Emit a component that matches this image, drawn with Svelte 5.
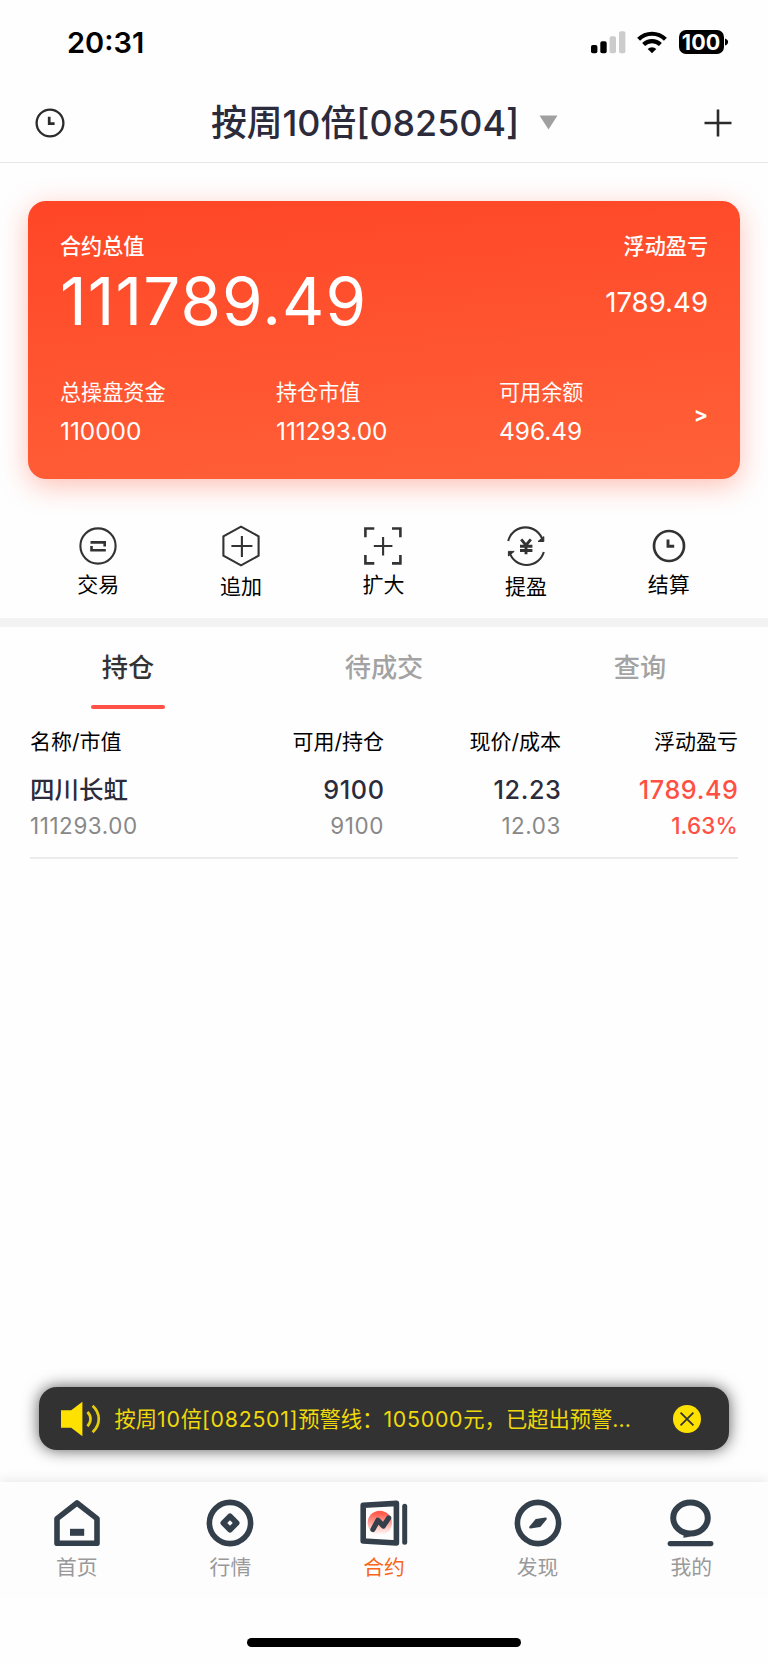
<script lang="ts">
	type Action = { id: string; label: string; tall?: boolean };

	let activeTab = $state(0);
	let activeNav = $state('contract');
	let noticeVisible = $state(true);

	const summary = [
		{ label: '总操盘资金', value: '110000' },
		{ label: '持仓市值', value: '111293.00' },
		{ label: '可用余额', value: '496.49' }
	];

	const actions: Action[] = [
		{ id: 'trade', label: '交易' },
		{ id: 'append', label: '追加', tall: true },
		{ id: 'expand', label: '扩大' },
		{ id: 'withdraw', label: '提盈', tall: true },
		{ id: 'settle', label: '结算' }
	];

	const tabs = ['持仓', '待成交', '查询'];
	const columns = ['名称/市值', '可用/持仓', '现价/成本', '浮动盈亏'];

	const positions = [
		{
			name: '四川长虹',
			marketValue: '111293.00',
			available: '9100',
			held: '9100',
			price: '12.23',
			cost: '12.03',
			profit: '1789.49',
			rate: '1.63%'
		}
	];

	const navItems = [
		{ id: 'home', label: '首页' },
		{ id: 'market', label: '行情' },
		{ id: 'contract', label: '合约' },
		{ id: 'discover', label: '发现' },
		{ id: 'mine', label: '我的' }
	];
</script>

<div class="page">
	<div class="status-bar">
		<span class="time">20:31</span>
		<div class="status-icons">
			<svg class="signal" width="35" height="23" viewBox="0 0 35 23">
				<rect x="0" y="14" width="6.4" height="8.3" rx="1.8" />
				<rect x="9.3" y="10.3" width="6.4" height="12" rx="1.8" />
				<rect x="18.6" y="5.3" width="6.4" height="17" rx="1.8" fill="#ccc" />
				<rect x="28" y="0.3" width="6.4" height="22" rx="1.8" fill="#ccc" />
			</svg>
			<svg class="wifi" width="30" height="23" viewBox="0 0 30 23">
				<g fill="none" stroke="#000" stroke-width="4.2">
					<path d="M1.6 8.2a19.2 19.2 0 0 1 26.8 0" />
					<path d="M6.6 13.6a12 12 0 0 1 16.8 0" />
				</g>
				<path d="M15 22.2l-4.3-4.3a6.2 6.2 0 0 1 8.6 0z" />
			</svg>
			<div class="battery">100</div>
			<svg width="4" height="8" viewBox="0 0 4 8"><path d="M0 0.4c4.2 1.4 4.2 5.8 0 7.2z" /></svg>
		</div>
	</div>

	<header class="header">
		<svg width="30" height="30" viewBox="0 0 30 30" fill="none" stroke="#2b2b2b">
			<circle cx="15" cy="15" r="13.4" stroke-width="2.3" />
			<path d="M14.2 8.8v6.8h5.4" stroke-width="2.7" />
		</svg>
		<div class="title">
			<h1>按周10倍[082504]</h1>
			<svg width="19" height="15" viewBox="0 0 19 15"><path d="M0.5 0.5h18L9.5 14.5z" fill="#a0a0a0" /></svg>
		</div>
		<svg width="28" height="28" viewBox="0 0 28 28" stroke="#2b2b2b" stroke-width="2.6">
			<path d="M0.5 14h27M14 0.5v27" />
		</svg>
	</header>

	<section class="card">
		<div class="card-line">
			<span>合约总值</span>
			<span>浮动盈亏</span>
		</div>
		<div class="card-totals">
			<span class="total">111789.49</span>
			<span class="floating">1789.49</span>
		</div>
		<div class="card-summary">
			{#each summary as item}
				<div>
					<div class="summary-label">{item.label}</div>
					<div class="summary-value">{item.value}</div>
				</div>
			{/each}
			<span class="more">&gt;</span>
		</div>
	</section>

	<section class="actions">
		{#each actions as action}
			<button class="action">
				<span class="action-icon" class:tall={action.tall}>
					<svg width="42" height="42" viewBox="0 0 42 42" fill="none" stroke="#333" stroke-width="2.1">
						{#if action.id === 'trade'}
							<circle cx="21" cy="21" r="17.6" />
							<path d="M13.5 17.4H27.7V21.6M28.8 25.2H14.5V21" stroke-width="2.6" />
						{:else if action.id === 'append'}
							<path d="M21 1.7l17.6 9.6v19.4L21 40.3 3.4 30.7V11.3z" />
							<path d="M11.4 21h21M21.9 11v21" />
						{:else if action.id === 'expand'}
							<path d="M3.4 12.3V3.5H12.3M30 3.5H38.4V12.3M38.4 30V38.4H30M12.3 38.4H3.4V30" stroke-width="2.6" />
							<path d="M11.8 21h18.6M21.1 12v18.6" />
						{:else if action.id === 'withdraw'}
							<path d="M3.2 16A17.8 17.8 0 0 1 37.8 16M38.8 27A17.9 17.9 0 0 1 4.4 27" />
							<path d="M38.8 11.6v4.9h-5.8zM3.4 31v-4.6h5.8z" fill="#333" stroke-width="1" />
							<path d="M16.2 14.4l4.8 5.8 4.8-5.8M21 20v9.2M15 21.2h12.4M15 25.5h12.4" stroke-width="2.9" />
						{:else}
							<circle cx="21" cy="21" r="15" stroke-width="2.7" />
							<path d="M20 14.4v6.8h6.2" stroke-width="2.9" />
						{/if}
					</svg>
				</span>
				<span class="action-label">{action.label}</span>
			</button>
		{/each}
	</section>

	<div class="tabs">
		{#each tabs as tab, i}
			<button class="tab" class:active={activeTab === i} onclick={() => (activeTab = i)}>{tab}</button>
		{/each}
	</div>

	<section class="positions">
		<div class="row head">
			{#each columns as column}
				<span>{column}</span>
			{/each}
		</div>
		{#each positions as p}
			<div class="position">
				<div class="row main">
					<span class="name">{p.name}</span>
					<span>{p.available}</span>
					<span>{p.price}</span>
					<span class="up">{p.profit}</span>
				</div>
				<div class="row sub">
					<span>{p.marketValue}</span>
					<span>{p.held}</span>
					<span>{p.cost}</span>
					<span class="up">{p.rate}</span>
				</div>
			</div>
		{/each}
	</section>

	{#if noticeVisible}
		<div class="notice">
			<svg width="42" height="36" viewBox="0 0 42 36">
				<path d="M1 9.2h10.2L22.4 0.8v34.4L11.2 26.8H1z" fill="#ffe100" />
				<path d="M27.4 11c4.2 4.2 4.2 10 0 14.2M32.6 4.8c8.2 7.6 8.2 18.6 0 26.4" fill="none" stroke="#e6cd0c" stroke-width="2.7" />
			</svg>
			<p>按周<span class="num">10</span>倍<span class="num">[082501]</span>预警线：<span class="num">105000</span>元，已超出预警...</p>
			<button class="close" aria-label="关闭" onclick={() => (noticeVisible = false)}>
				<svg width="28" height="28" viewBox="0 0 28 28">
					<circle cx="14" cy="14" r="14" fill="#ffe100" />
					<path d="M7.6 7.6l12.8 12.8M20.4 7.6L7.6 20.4" stroke="#333" stroke-width="1.8" />
				</svg>
			</button>
		</div>
	{/if}

	<nav class="nav">
		{#each navItems as item}
			<button class="nav-item" class:active={activeNav === item.id} onclick={() => (activeNav = item.id)}>
				<svg width="48" height="48" viewBox="0 0 48 48" fill="none" stroke="#333f4a" stroke-width="5.6" stroke-linejoin="round">
					{#if item.id === 'home'}
						<path d="M4 19.6L24 4l20 15.6V44.3H4z" />
						<path d="M17 33.3h14.2" stroke-width="7" />
					{:else if item.id === 'market'}
						<circle cx="24" cy="24" r="20.6" />
						<path d="M24 17.3l6.7 6.7-6.7 6.7-6.7-6.7z" />
					{:else if item.id === 'contract'}
						<defs>
							<linearGradient id="sun" x1="0" y1="0" x2="0" y2="1">
								<stop offset="0.1" stop-color="#ff5a4c" />
								<stop offset="1" stop-color="#fff" />
							</linearGradient>
						</defs>
						<circle cx="19.8" cy="24" r="12.2" fill="url(#sun)" stroke="none" />
						<path d="M3.2 6.3L36.4 4.4V44L3.2 42z" />
						<path d="M12.9 30.5l5-9.2 5.4 5.8L28.7 19" stroke-linecap="round" stroke-width="5.2" />
						<path d="M44.7 7.3v36" stroke-linecap="round" stroke-width="5" />
					{:else if item.id === 'discover'}
						<circle cx="24" cy="24" r="20.6" />
						<path d="M16.3 28.3l5.8-7.1 9.6-1.5-5.8 7.1z" fill="#333f4a" stroke-width="2.2" />
					{:else}
						<ellipse cx="23.5" cy="19" rx="17.3" ry="15.4" stroke-width="6" />
						<path d="M17.3 32.5l-1 6.3c5-0.8 9.6-1.9 14-4.6z" fill="#333f4a" stroke="none" />
						<path d="M3.2 44.6h40.6" stroke-linecap="round" stroke-width="5.2" />
					{/if}
				</svg>
				<span>{item.label}</span>
			</button>
		{/each}
	</nav>

	<div class="home-area">
		<div class="home-indicator"></div>
	</div>
</div>

<style>
	:global(body) {
		margin: 0;
		background: #fefefe;
	}

	.page {
		display: flex;
		flex-direction: column;
		width: 768px;
		height: 1663px;
		overflow: hidden;
		font-family: Inter, 'Noto Sans CJK SC', sans-serif;
		color: #000;
		white-space: nowrap;
	}

	svg {
		display: block;
		flex: none;
	}

	button {
		margin: 0;
		padding: 0;
		border: 0;
		background: none;
		font: inherit;
		color: inherit;
		cursor: pointer;
	}

	.status-bar {
		display: flex;
		align-items: center;
		justify-content: space-between;
		box-sizing: border-box;
		height: 80px;
		padding: 4px 39px 0 67px;
	}

	.time {
		font-size: 29px;
		font-weight: 600;
	}

	.status-icons {
		display: flex;
		align-items: center;
	}

	.wifi {
		margin: 0 12px 0 11px;
	}

	.battery {
		width: 45px;
		height: 24px;
		margin-right: 1.5px;
		border-radius: 7px;
		background: #000;
		color: #fff;
		font-size: 21.5px;
		font-weight: 700;
		line-height: 25px;
		text-align: center;
	}

	.header {
		display: flex;
		align-items: center;
		justify-content: space-between;
		box-sizing: border-box;
		height: 83px;
		padding: 3px 36px 0 35px;
		border-bottom: 1px solid #e8e8e8;
	}

	.title {
		display: flex;
		align-items: center;
		gap: 20px;
	}

	h1 {
		margin: 0;
		color: #2c2b3b;
		font-size: 35.8px;
		font-weight: 500;
		line-height: 50px;
	}

	.card {
		flex: none;
		box-sizing: border-box;
		height: 278px;
		margin: 37.5px 28px 0;
		padding: 30px 32px 0;
		border-radius: 18px;
		background: linear-gradient(175deg, #ff4627, #ff6138);
		box-shadow: 0 7px 28px rgba(255, 72, 41, 0.34);
		color: #fff;
	}

	.card-line {
		display: flex;
		justify-content: space-between;
		font-size: 21.1px;
		font-weight: 500;
		line-height: 32px;
	}

	.card-totals {
		display: flex;
		justify-content: space-between;
		line-height: 78px;
	}

	.total {
		font-size: 65.5px;
		letter-spacing: 1.1px;
	}

	.floating {
		font-size: 27.6px;
	}

	.card-summary {
		display: grid;
		grid-template-columns: 216px 223px 1fr auto;
		align-items: center;
		margin-top: 36px;
	}

	.summary-label {
		font-size: 21.1px;
		line-height: 32px;
	}

	.summary-value {
		font-size: 24.4px;
		line-height: 44px;
	}

	.more {
		font-size: 21px;
		font-weight: 700;
	}

	.actions {
		display: flex;
		align-items: flex-start;
		box-sizing: border-box;
		height: 139.5px;
		padding: 46px 28px 0 27px;
	}

	.action {
		flex: 1;
		display: flex;
		flex-direction: column;
		align-items: center;
	}

	.action-icon {
		height: 42px;
	}

	.action-icon.tall {
		height: 44px;
	}

	.action-label {
		font-size: 21px;
		line-height: 36px;
	}

	.tabs {
		display: flex;
		border-top: 9px solid #f3f3f3;
	}

	.tab {
		position: relative;
		flex: 1;
		height: 82px;
		color: #a3a3a3;
		font-size: 26.2px;
		font-weight: 500;
		line-height: 82px;
	}

	.tab.active {
		color: #333;
	}

	.tab.active::after {
		content: '';
		position: absolute;
		bottom: 0;
		left: 50%;
		width: 74px;
		height: 4px;
		margin-left: -37px;
		border-radius: 2px;
		background: #ff5246;
	}

	.positions {
		flex: 1;
		padding: 15px 30px 0;
	}

	.row {
		display: grid;
		grid-template-columns: 1fr 150px 177px 177px;
		text-align: right;
	}

	.row span:first-child {
		text-align: left;
	}

	.head {
		font-size: 21px;
		line-height: 36px;
	}

	.position {
		padding: 12px 0 15px;
		border-bottom: 2px solid #ececec;
	}

	.main {
		margin-right: -0.5px;
		color: #2c2b3b;
		font-size: 25.2px;
		font-weight: 500;
		letter-spacing: 0.6px;
		line-height: 37px;
	}

	.name {
		font-size: 24.5px;
		letter-spacing: 0;
	}

	.sub {
		color: #888;
		font-size: 22.4px;
		letter-spacing: 0.6px;
		line-height: 33px;
	}

	.up {
		color: #ff5043;
	}

	.sub .up {
		font-weight: 500;
		letter-spacing: 0.2px;
	}

	.notice {
		display: flex;
		align-items: center;
		box-sizing: border-box;
		height: 63px;
		margin: 0 39px 32px 38.5px;
		padding: 0 28.5px 0 21.5px;
		border-radius: 18px;
		background: #323232;
		box-shadow: 0 0 16px rgba(0, 0, 0, 0.65);
		color: #f0d90a;
	}

	.notice p {
		flex: 1;
		margin: 1px 0 0 12.5px;
		font-size: 21.3px;
		line-height: 32px;
	}

	.num {
		letter-spacing: 0.75px;
	}

	.nav {
		display: flex;
		box-sizing: border-box;
		height: 116px;
		padding-top: 17px;
		background: #fdfdfd;
		box-shadow: 0 -1px 12px rgba(0, 0, 0, 0.1);
	}

	.nav-item {
		flex: 1;
		display: flex;
		flex-direction: column;
		align-items: center;
		color: #999;
		font-size: 20.8px;
		line-height: 41px;
	}

	.nav-item.active {
		color: #f9661a;
	}

	.home-area {
		display: flex;
		justify-content: center;
		align-items: flex-end;
		box-sizing: border-box;
		height: 65px;
		padding-bottom: 16px;
		background: #fefefe;
	}

	.home-indicator {
		width: 274px;
		height: 9px;
		border-radius: 5px;
		background: #000;
	}
</style>
